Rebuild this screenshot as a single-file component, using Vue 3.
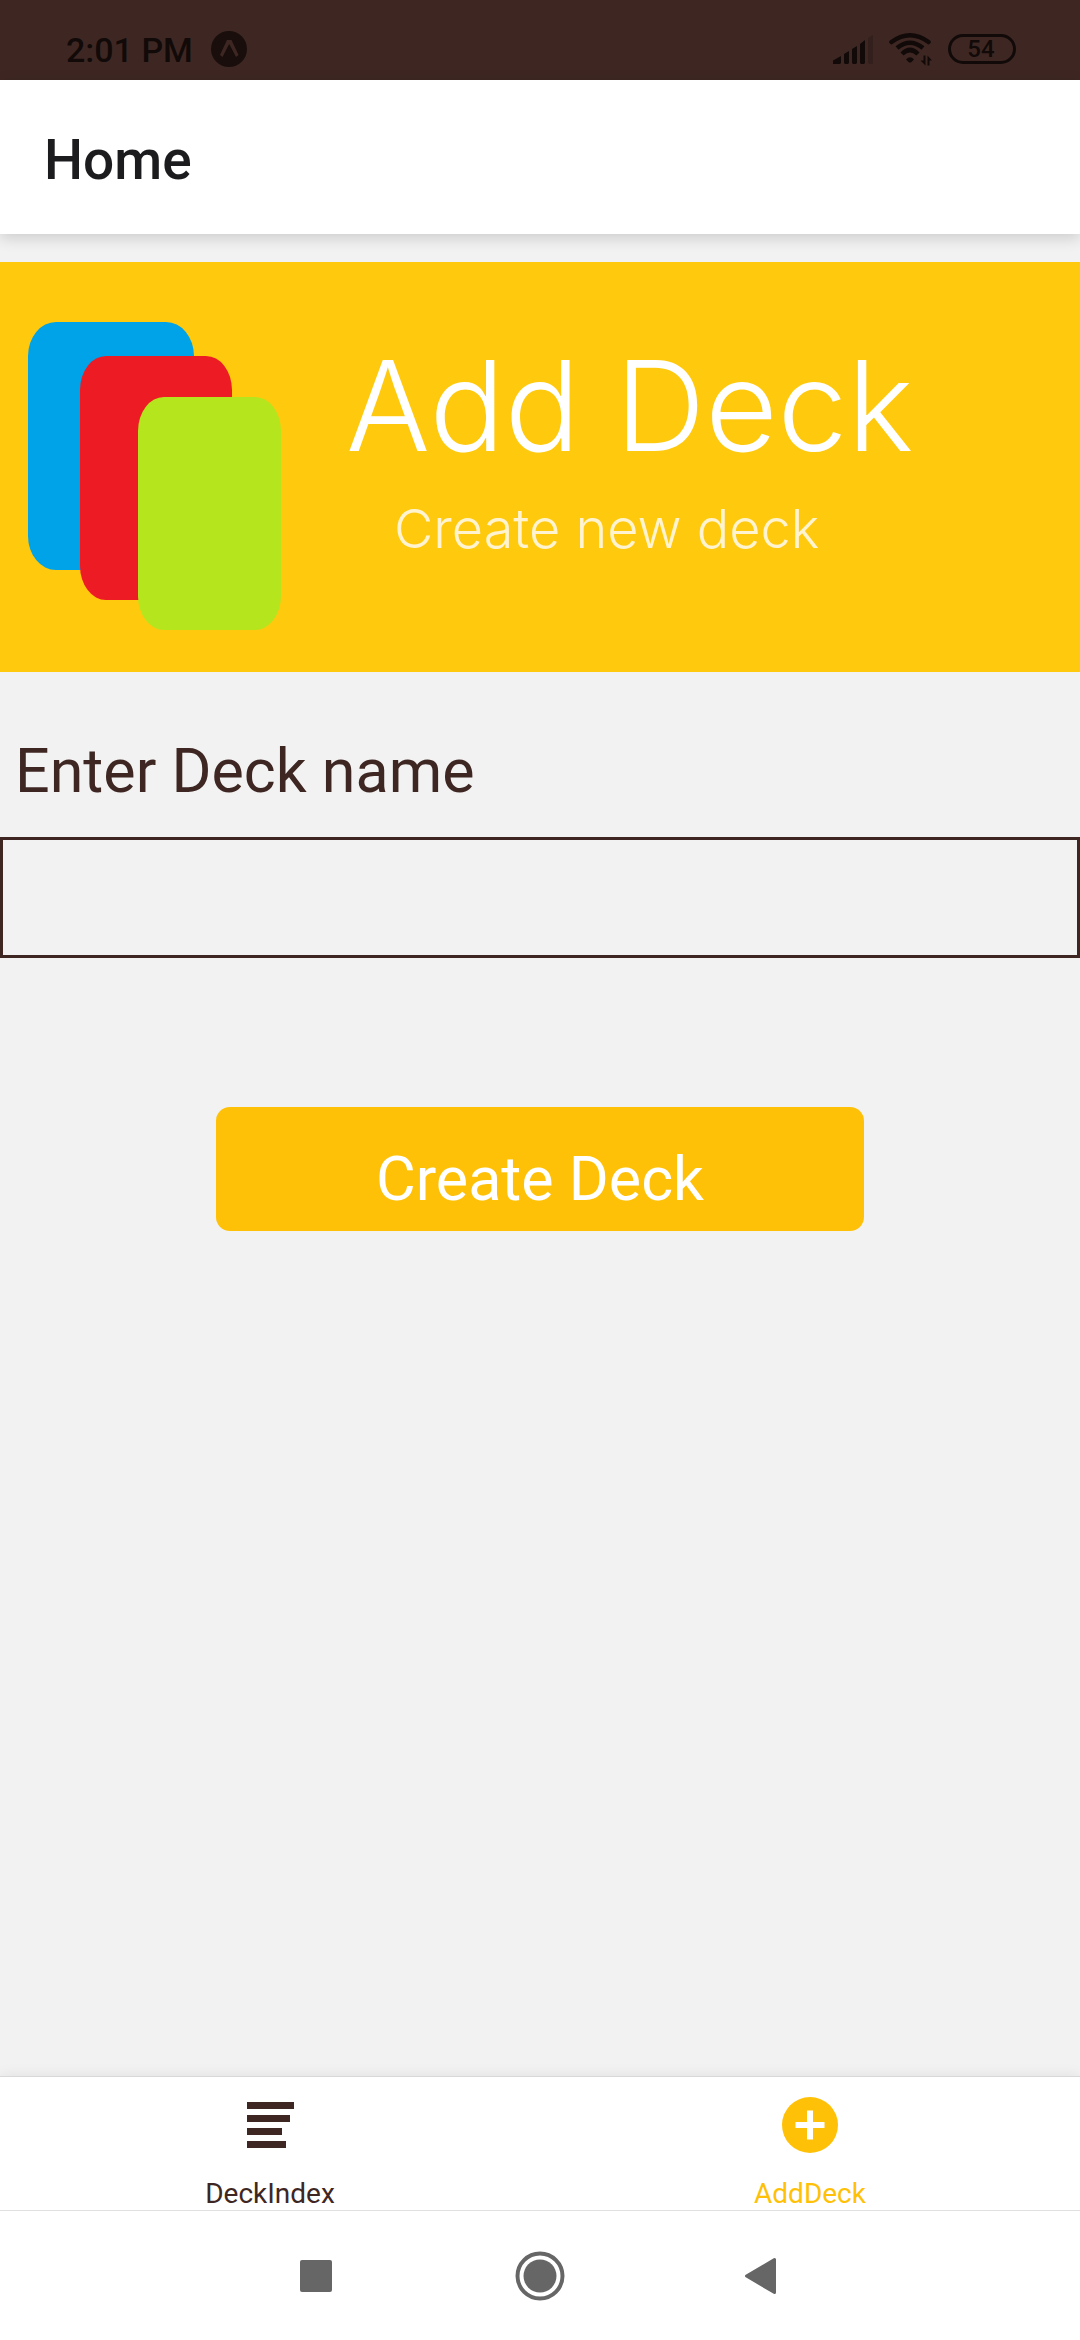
<script setup>
import { ref } from 'vue'

const deckName = ref('')
</script>

<template>
  <div class="screen">
    <header class="status">
      <span class="time">2:01 PM</span>
      <svg class="expo" viewBox="0 0 36 36" width="36" height="36" aria-hidden="true">
        <circle cx="18" cy="18" r="18" fill="#190e0c" />
        <path d="M9 24 L16 9 H20.500 L27.500 24 L25 26 L18.200 13 L11.500 26 Z" fill="#3e2723" />
        <path d="M12.300 26 L18.200 14 L24.500 26 Z" fill="#190e0c" />
      </svg>
      <span class="grow"></span>
      <svg class="signal" viewBox="0 0 40 30" width="40" height="30" aria-hidden="true">
        <g fill="#110a09">
          <path d="M0 30 V26.500 L8 22 V29 L7 30 Z" />
          <path d="M11 29 V20 L16 17 V29 L15 30 H12 Z" />
          <path d="M19 29 V15 L24 12 V29 L23 30 H20 Z" />
          <path d="M27 29 V10 L32 6 V29 L31 30 H28 Z" />
        </g>
        <path d="M35 29 V4 L40 1 V30 H36 Z" fill="#33201c" />
      </svg>
      <svg class="wifi" viewBox="0 0 43 34" width="43" height="34" aria-hidden="true">
        <g fill="none" stroke="#110a09" stroke-width="4.500" stroke-linecap="round">
          <path d="M2.500 10 Q21 -3.500 39.500 10" />
          <path d="M8 16 Q21 5.500 34 16" stroke-linecap="butt" />
          <path d="M13 22 Q21 14 29 22" stroke-linecap="butt" />
        </g>
        <path d="M17 27.500 Q21 23 25 27.500 L22 30.500 H20 Z" fill="#110a09" />
        <path d="M34.500 23.500 H36.500 V33.500 L31.500 28.500 H34.500 Z M38.500 33.500 V23.500 L43 28.500 H40.500 V33.500 Z" fill="#110a09" />
      </svg>
      <span class="battery">54</span>
    </header>

    <div class="appbar"><h1>Home</h1></div>

    <main>
      <section class="banner">
        <svg viewBox="0 0 254 310" width="254" height="310" aria-hidden="true">
          <rect width="166" height="248" rx="28" ry="34" fill="#00a2e8" />
          <rect x="52" y="34" width="152" height="244" rx="26" ry="34" fill="#ed1c24" />
          <rect x="110" y="75" width="143" height="233" rx="26" ry="34" fill="#b5e61d" />
        </svg>
        <div class="words">
          <h2>Add Deck</h2>
          <p>Create new deck</p>
        </div>
      </section>

      <form @submit.prevent>
        <label for="deck-name">Enter Deck name</label>
        <input id="deck-name" v-model="deckName" type="text" autocomplete="off" />
        <button type="submit">Create Deck</button>
      </form>
    </main>

    <nav class="tabs">
      <a href="#deck-index">
        <svg viewBox="0 0 56 56" width="56" height="56" aria-hidden="true">
          <path d="M5 5 h47 v7 h-47 Z M5 18 h43 v7 h-43 Z M5 31 h35 v7 h-35 Z M5 44 h39 v7 h-39 Z" fill="#3e2723" />
        </svg>
        <span>DeckIndex</span>
      </a>
      <a href="#add-deck" class="active" aria-current="page">
        <svg viewBox="0 0 56 56" width="56" height="56" aria-hidden="true">
          <circle cx="28" cy="28" r="28" fill="#ffc107" />
          <path d="M25 13.500 h6 v11.500 h11.500 v6 h-11.500 v11.500 h-6 v-11.500 h-11.500 v-6 h11.500 Z" fill="#fff" />
        </svg>
        <span>AddDeck</span>
      </a>
    </nav>

    <footer class="system">
      <button type="button" aria-label="Recent apps">
        <svg viewBox="0 0 50 50" width="50" height="50"><rect x="9" y="9" width="32" height="32" rx="2" fill="#666" /></svg>
      </button>
      <button type="button" aria-label="Home screen">
        <svg viewBox="0 0 50 50" width="50" height="50">
          <circle cx="25" cy="25" r="22.500" fill="none" stroke="#666" stroke-width="4" />
          <circle cx="25" cy="25" r="16.500" fill="#666" />
        </svg>
      </button>
      <button type="button" aria-label="Back">
        <svg viewBox="0 0 50 50" width="50" height="50"><path d="M7.500 25 L35.500 8.500 V41.500 Z" fill="#666" stroke="#666" stroke-width="3" stroke-linejoin="round" /></svg>
      </button>
    </footer>
  </div>
</template>

<style>
body {
  margin: 0;
}
</style>

<style scoped>
.screen {
  display: flex;
  flex-direction: column;
  min-height: 100vh;
  background: #f2f2f2;
  color: #3e2723;
  font-family: Roboto, "Liberation Sans", sans-serif;
}

h1, h2, p {
  margin: 0;
}

.status {
  display: flex;
  align-items: center;
  box-sizing: border-box;
  height: 80px;
  padding: 18px 64px 0;
  background: #3e2723;
  color: #110a09;
}

.time {
  padding: 2px 2px 0;
  font-size: 34px;
  font-weight: 500;
  line-height: 40px;
}

.expo {
  margin-left: 16px;
}

.grow {
  flex: 1;
}

.wifi {
  margin: 0 16px;
}

.battery {
  box-sizing: border-box;
  width: 68px;
  height: 30px;
  padding-right: 2px;
  border: 3px solid #110a09;
  border-radius: 15px;
  font-size: 24px;
  font-weight: 500;
  line-height: 24px;
  text-align: center;
}

.appbar {
  z-index: 1;
  display: flex;
  align-items: center;
  box-sizing: border-box;
  height: 154px;
  padding: 6px 44px 0;
  background: #fff;
  box-shadow: 0 4px 14px rgba(0, 0, 0, 0.16);
}

h1 {
  color: #1c1c1e;
  font-size: 55px;
  font-weight: 500;
  line-height: 64px;
}

main {
  flex: 1;
  padding-top: 28px;
}

.banner {
  display: flex;
  align-items: flex-start;
  box-sizing: border-box;
  height: 410px;
  padding: 60px 28px 0;
  background: #ffc90e;
}

.words {
  margin-left: 64px;
  padding-top: 12px;
  color: #fff;
  font-family: Inter, sans-serif;
  font-weight: 350;
}

h2 {
  font-size: 125px;
  font-weight: 350;
  line-height: 144px;
}

p {
  padding: 11px 0 0 48px;
  color: #fff4cf;
  font-size: 54px;
  line-height: 80px;
}

form {
  display: flex;
  flex-direction: column;
  padding-top: 63px;
}

label {
  padding: 0 15px;
  font-size: 61px;
  line-height: 72px;
}

input {
  box-sizing: border-box;
  width: 100%;
  height: 121px;
  margin-top: 30px;
  padding: 0 16px;
  border: 3px solid #3e2723;
  border-radius: 0;
  background: transparent;
  color: inherit;
  font: inherit;
  font-size: 61px;
}

form button {
  width: 60%;
  height: 124px;
  margin: 149px auto 0;
  padding: 20px 0 0;
  border: 0;
  border-radius: 14px;
  background: #ffc107;
  color: #fff;
  font: inherit;
  font-size: 61px;
  line-height: 72px;
}

.tabs {
  display: flex;
  height: 133px;
  border-top: 1px solid #d8d8d8;
  background: #fff;
  box-shadow: 0 0 14px rgba(0, 0, 0, 0.08);
}

.tabs a {
  display: flex;
  flex: 1;
  flex-direction: column;
  align-items: center;
  padding-top: 20px;
  color: #3e2723;
  font-size: 28px;
  line-height: 32px;
  text-decoration: none;
}

.tabs a.active {
  color: #ffc107;
}

.tabs span {
  margin-top: 25px;
}

.system {
  z-index: 1;
  display: flex;
  align-items: center;
  justify-content: center;
  gap: 174px;
  height: 129px;
  border-top: 1px solid #e0e0e0;
  background: #fff;
}

.system button {
  display: flex;
  padding: 0;
  border: 0;
  background: none;
}
</style>
